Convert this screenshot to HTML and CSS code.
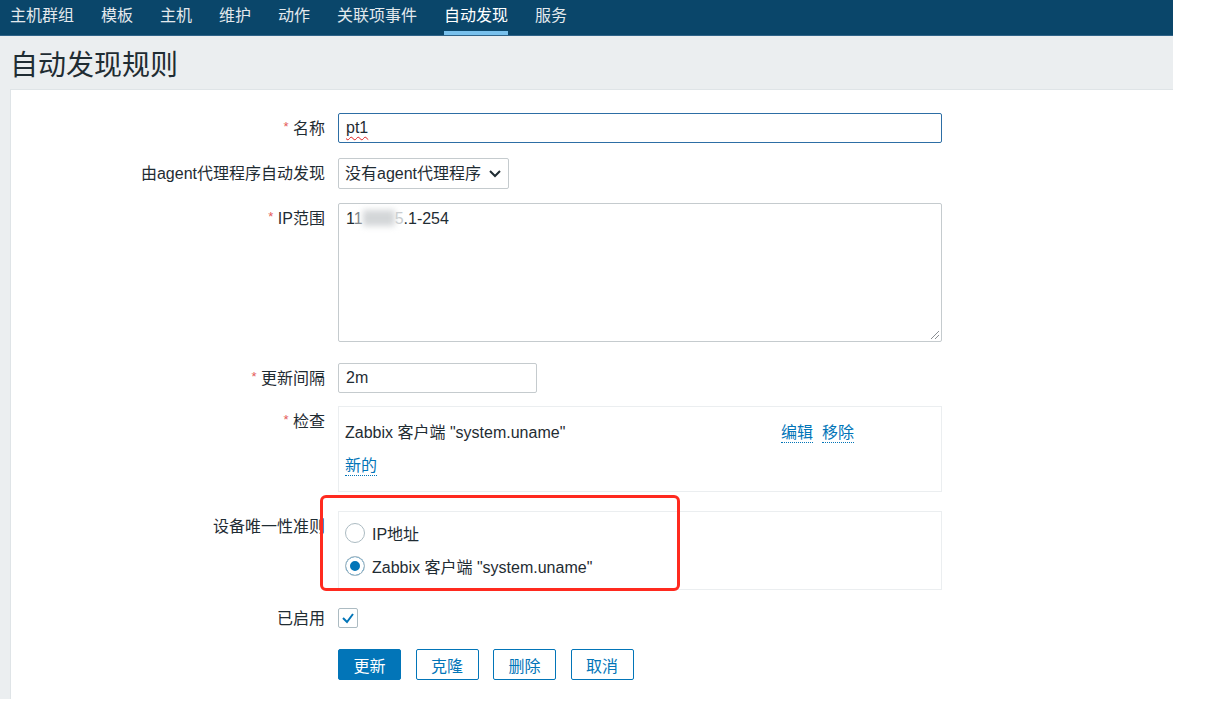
FILE: index.html
```html
<!DOCTYPE html>
<html lang="zh-CN">
<head>
    <meta charset="UTF-8">
    <meta name="viewport" content="width=device-width, initial-scale=1.0">
    <title>自动发现规则</title>
    <link rel="stylesheet" href="styles.css">
</head>
<body>
    <div class="app">
        <nav class="topnav">
            <ul>
                <li>主机群组</li>
                <li>模板</li>
                <li>主机</li>
                <li>维护</li>
                <li>动作</li>
                <li>关联项事件</li>
                <li class="selected">自动发现</li>
                <li>服务</li>
            </ul>
        </nav>

        <header class="page-title">
            <h1>自动发现规则</h1>
        </header>

        <main class="panel">
            <div class="form">
                <div class="row">
                    <div class="label"><span class="req">*</span> 名称</div>
                    <div class="field input input-wide focused"><span class="typo">pt1</span></div>
                </div>

                <div class="row gap-15">
                    <div class="label">由agent代理程序自动发现</div>
                    <div class="field input select">
                        <span>没有agent代理程序</span>
                        <svg width="14" height="10" viewBox="0 0 14 10"><polyline points="2,2 7,7 12,2" fill="none" stroke="#1f2c33" stroke-width="2"/></svg>
                    </div>
                </div>

                <div class="row gap-sm">
                    <div class="label"><span class="req">*</span> IP范围</div>
                    <div class="field textarea">
                        <span>1</span><span class="half">1</span><span class="blurred"></span><span class="faded">5</span><span>.1-254</span>
                        <svg class="grip" width="11" height="11" viewBox="0 0 11 11"><line x1="10" y1="2" x2="2" y2="10" stroke="#8a8f93" stroke-width="1"/><line x1="10" y1="6" x2="6" y2="10" stroke="#8a8f93" stroke-width="1"/></svg>
                    </div>
                </div>

                <div class="row gap-lg">
                    <div class="label"><span class="req">*</span> 更新间隔</div>
                    <div class="field input input-short">2m</div>
                </div>

                <div class="row gap-13">
                    <div class="label"><span class="req">*</span> 检查</div>
                    <div class="field box checks">
                        <div class="check-row">
                            <span>Zabbix 客户端 "system.uname"</span>
                            <span class="actions"><a class="link">编辑</a><a class="link">移除</a></span>
                        </div>
                        <div class="new-row"><a class="link">新的</a></div>
                    </div>
                </div>

                <div class="row gap-19">
                    <div class="label">设备唯一性准则</div>
                    <div class="field box radios">
                        <div class="radio-row"><span class="radio"></span>IP地址</div>
                        <div class="radio-row"><span class="radio checked"></span>Zabbix 客户端 "system.uname"</div>
                    </div>
                </div>

                <div class="row gap-md row-center">
                    <div class="label label-short">已启用</div>
                    <div class="field">
                        <span class="checkbox">
                            <svg width="14" height="12" viewBox="0 0 14 12"><polyline points="2,6 6,10 12,2" fill="none" stroke="#0275b8" stroke-width="2"/></svg>
                        </span>
                    </div>
                </div>

                <div class="row gap-lg">
                    <div class="label"></div>
                    <div class="field buttons">
                        <button class="btn primary">更新</button>
                        <button class="btn">克隆</button>
                        <button class="btn">删除</button>
                        <button class="btn">取消</button>
                    </div>
                </div>
            </div>

            <div class="annotation"></div>
        </main>
    </div>
</body>
</html>
```

FILE: styles.css
```css
body {
    margin: 0;
    background: #fff;
    font-family: "Liberation Sans", "Noto Sans CJK SC", sans-serif;
    font-size: 16px;
    color: #1f2c33;
}
.app {
    width: 1173px;
    height: 699px;
    background: #ebeef0;
    display: flex;
    flex-direction: column;
}
.topnav {
    height: 35px;
    background: #0a466a;
    border-bottom: 1px solid #2f6388;
}
.topnav ul {
    list-style: none;
    margin: 0;
    padding: 0 0 0 10px;
    display: flex;
    gap: 27px;
}
.topnav li {
    padding: 5px 0 4px;
    line-height: 22px;
    color: #e3e9ed;
    border-bottom: 4px solid transparent;
}
.topnav li.selected {
    color: #fff;
    border-bottom-color: #78c0ec;
}
.page-title {
    height: 53px;
    box-sizing: border-box;
    padding: 13px 0 0 10px;
}
.page-title h1 {
    margin: 0;
    font-size: 28px;
    font-weight: normal;
    line-height: 34px;
    color: #1f2c33;
}
.panel {
    flex: 1;
    position: relative;
    margin-left: 10px;
    background: #fff;
    border-left: 1px solid #dfe4e7;
    border-top: 1px solid #dfe4e7;
}
.form {
    padding-top: 23px;
}
.row {
    display: grid;
    grid-template-columns: 314px auto;
    column-gap: 13px;
    align-items: start;
}
.gap-13 { margin-top: 13px; }
.gap-sm { margin-top: 14px; }
.gap-15 { margin-top: 15px; }
.gap-md { margin-top: 18px; }
.gap-19 { margin-top: 19px; }
.gap-lg { margin-top: 21px; }
.row-center { align-items: center; }
.label {
    text-align: right;
    height: 30px;
    line-height: 31px;
    white-space: nowrap;
}
.label-short { height: 20px; line-height: 21px; }
.req {
    color: #e45959;
    font-size: 13px;
    line-height: 0;
    vertical-align: 3px;
}
.field {
    justify-self: start;
}
.input {
    box-sizing: border-box;
    height: 30px;
    line-height: 28px;
    padding: 0 7px;
    border: 1px solid #c5cbce;
    border-radius: 2px;
    background: #fff;
}
.input-wide { width: 604px; }
.input-short { width: 199px; }
.focused { border-color: #2d6ea5; }
.typo {
    text-decoration: underline wavy #e02020;
    text-decoration-thickness: 1px;
    text-underline-offset: 3px;
}
.select {
    width: 171px;
    height: 31px;
    display: flex;
    align-items: center;
    justify-content: space-between;
    padding: 0 6px 0 6px;
}
.textarea {
    position: relative;
    box-sizing: border-box;
    width: 604px;
    height: 139px;
    padding: 2px 7px;
    line-height: 26px;
    border: 1px solid #c5cbce;
    border-radius: 2px;
}
.textarea .half { color: #7c8388; }
.textarea .faded { color: #c9cdd0; }
.blurred {
    display: inline-block;
    width: 32px;
    height: 16px;
    vertical-align: -2px;
    background: #d3d6d8;
    filter: blur(3px);
}
.grip {
    position: absolute;
    right: 1px;
    bottom: 1px;
}
.box {
    box-sizing: border-box;
    width: 604px;
    border: 1px solid #ebeef0;
    background: #fff;
}
.checks {
    padding: 10px 6px;
}
.check-row {
    display: grid;
    grid-template-columns: 436px auto;
    align-items: center;
    line-height: 32px;
}
.actions {
    display: flex;
    align-items: center;
    gap: 9px;
}
.new-row {
    margin-top: 2px;
    line-height: 30px;
}
.link {
    color: #0275b8;
    border-bottom: 1px dotted #0275b8;
    line-height: 18px;
    display: inline-block;
}
.radios {
    padding: 6px 6px 8px;
}
.radio-row {
    display: flex;
    align-items: center;
    gap: 7px;
    height: 30px;
}
.radio-row + .radio-row { margin-top: 3px; }
.radio {
    box-sizing: border-box;
    width: 20px;
    height: 20px;
    border: 1px solid #acbbc2;
    border-radius: 50%;
    background: #fff;
}
.radio.checked {
    background: #0275b8;
    box-shadow: inset 0 0 0 4px #fff;
}
.checkbox {
    box-sizing: border-box;
    display: flex;
    align-items: center;
    justify-content: center;
    width: 20px;
    height: 20px;
    border: 1px solid #acbbc2;
    border-radius: 2px;
}
.buttons {
    display: flex;
    gap: 14.5px;
}
.btn {
    width: 63px;
    height: 31px;
    padding: 0;
    font-family: inherit;
    font-size: 16px;
    color: #0275b8;
    background: #fff;
    border: 1px solid #0275b8;
    border-radius: 2px;
}
.btn.primary {
    color: #fff;
    background: #0275b8;
}
.annotation {
    position: absolute;
    left: 309px;
    top: 405px;
    width: 360px;
    height: 96px;
    box-sizing: border-box;
    border: 3px solid #ff2a1f;
    border-radius: 6px;
}
```
